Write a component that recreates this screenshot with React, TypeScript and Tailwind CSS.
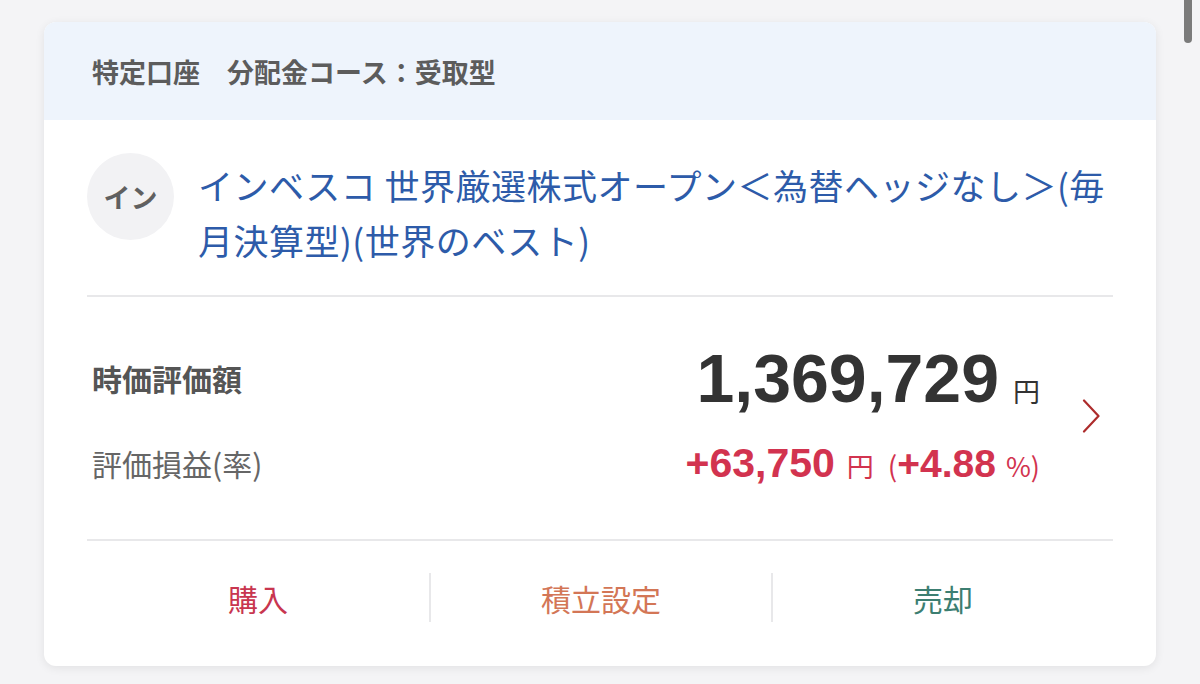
import React from 'react'

const JP = "font-['Noto_Sans_CJK_JP',sans-serif]"
const NUM = "font-['Liberation_Sans','Noto_Sans_CJK_JP',sans-serif]"

function Chevron() {
  return (
    <svg width="18" height="34" viewBox="0 0 18 34" fill="none">
      <path d="M2 1.5 L16.5 17 L2 32.5" stroke="#ad2c2c" strokeWidth="2.2" strokeLinecap="round" strokeLinejoin="round" />
    </svg>
  )
}

const ACTIONS = [
  { label: '購入', color: 'text-[#c8364f]' },
  { label: '積立設定', color: 'text-[#d37656]' },
  { label: '売却', color: 'text-[#3c7e71]' },
]

export default function App() {
  return (
    <div className={`relative w-[1200px] h-[684px] overflow-hidden bg-[#f4f4f6] pt-[22px] pl-[44px] ${JP}`}>
      {/* scroll indicator */}
      <div className="absolute right-[8px] top-0 w-[8px] h-[43px] rounded-b-full bg-[#7b7b7b]" />

      <div className="w-[1112px] rounded-xl bg-white overflow-hidden shadow-[0_2px_10px_rgba(0,0,0,0.08)]">
        {/* account header */}
        <div className="h-[98px] bg-[#eef4fc] px-[48px] flex items-center">
          <span className="text-[27px] font-bold text-[#5c5c5c] leading-none">特定口座　分配金コース：受取型</span>
        </div>

        <div className="px-[43px]">
          {/* fund name */}
          <div className="flex items-start pt-[33px] pb-[28px] border-b-2 border-[#e8e8ea]">
            <div className="w-[87px] h-[87px] shrink-0 rounded-full bg-[#f2f2f4] flex items-center justify-center">
              <span className="text-[27px] font-bold text-[#606060] leading-none">イン</span>
            </div>
            <p className="ml-[24px] pt-[4px] text-[35px] leading-[55px] tracking-[0.5px] text-[#2d5ba9]">
              インベスコ 世界厳選株式オープン＜為替ヘッジなし＞(毎月決算型)(世界のベスト)
            </p>
          </div>

          {/* valuation */}
          <div className="flex pt-[46px] pb-[51px] border-b-2 border-[#e8e8ea]">
            <div className="flex-1 pl-[5px]">
              <div className="h-[70px] flex items-center justify-between">
                <span className="text-[30px] font-bold text-[#555]">時価評価額</span>
                <div className="flex items-baseline text-[#333]">
                  <span className={`${NUM} text-[68px] font-bold leading-none`}>1,369,729</span>
                  <span className="ml-[14px] text-[27px] leading-none">円</span>
                </div>
              </div>
              <div className="h-[50px] mt-[25px] flex items-center justify-between">
                <span className="text-[30px] text-[#666]">評価損益(率)</span>
                <div className="flex items-baseline text-[#d2334f] leading-none">
                  <span className={`${NUM} text-[41px] font-bold`}>+63,750</span>
                  <span className="ml-[12px] text-[27px]">円</span>
                  <span className="ml-[14px] text-[28px]">(</span>
                  <span className={`${NUM} text-[39px] font-bold`}>+4.88</span>
                  <span className="ml-[10px] text-[27px]">%)</span>
                </div>
              </div>
            </div>
            <div className="w-[73px] flex items-center justify-end pr-[13px]">
              <Chevron />
            </div>
          </div>

          {/* actions */}
          <div className="h-[125px] pb-[12px] grid grid-cols-3 items-center">
            {ACTIONS.map((a, i) => (
              <div
                key={a.label}
                className={`h-[49px] flex items-center justify-center ${i > 0 ? 'border-l-2 border-[#e8e8ea]' : ''}`}
              >
                <span className={`text-[30px] leading-none ${a.color}`}>{a.label}</span>
              </div>
            ))}
          </div>
        </div>
      </div>
    </div>
  )
}
